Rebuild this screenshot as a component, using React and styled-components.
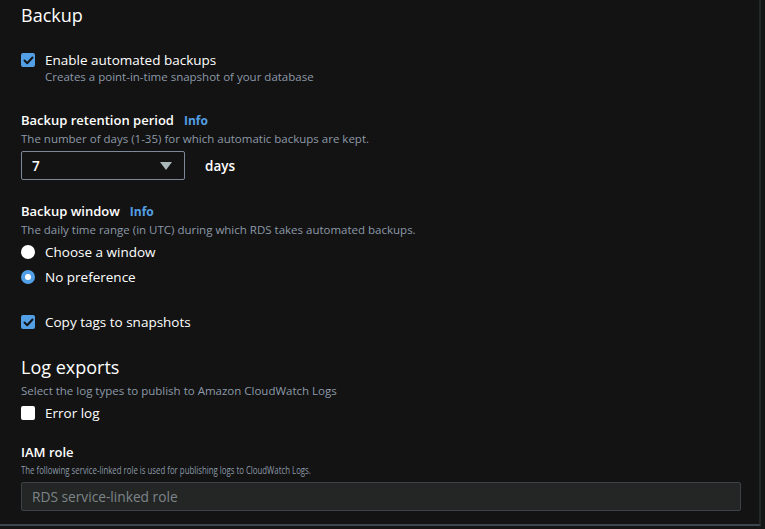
import styled, { createGlobalStyle } from 'styled-components'

const GlobalStyle = createGlobalStyle`
  html, body {
    margin: 0;
    padding: 0;
    background: #151515;
  }
  body {
    font-family: "Open Sans", "Noto Sans", sans-serif;
    color: #f2f3f3;
  }
`

const Page = styled.div`
  width: 761px;
  height: 526px;
  background: #131313;
  border-right: 2px solid #22272a;
  border-bottom: 2px solid #3d4650;
  box-sizing: border-box;
  padding: 3px 0 0 21px;
  overflow: hidden;
`

const Heading = styled.h2`
  margin: ${p => p.$top || 0}px 0 ${p => p.$bottom || 0}px;
  font-size: 18px;
  font-weight: 400;
  line-height: 24px;
  color: #ffffff;
`

const Section = styled.div`
  margin-top: ${p => p.$top || 0}px;
`

const LabelRow = styled.div`
  display: flex;
  align-items: baseline;
  gap: 10px;
  font-size: 13px;
  font-weight: 600;
  line-height: ${p => p.$lh || 19}px;
  color: #ffffff;
`

const Info = styled.a`
  color: #539fe5;
  font-size: 12px;
  font-weight: 700;
  text-decoration: none;
`

const Desc = styled.div`
  font-size: 11.5px;
  line-height: 17px;
  color: #8d99a8;
`

const OptionDesc = styled(Desc)`
  margin-top: -2px;
`

const Option = styled.label`
  display: flex;
  align-items: flex-start;
  gap: 10px;
  margin-top: ${p => p.$top || 0}px;
`

const Box = styled.span`
  width: 14px;
  height: 14px;
  margin-top: 3px;
  flex-shrink: 0;
  border-radius: 2px;
  background: ${p => (p.$checked ? '#539fe5' : '#ffffff')};
  display: flex;
  align-items: center;
  justify-content: center;
`

const Radio = styled.span`
  width: 14px;
  height: 14px;
  margin-top: 3px;
  flex-shrink: 0;
  border-radius: 50%;
  background: ${p => (p.$checked ? '#539fe5' : '#ffffff')};
  display: flex;
  align-items: center;
  justify-content: center;

  &::after {
    content: '';
    display: ${p => (p.$checked ? 'block' : 'none')};
    width: 6px;
    height: 6px;
    border-radius: 50%;
    background: #ffffff;
  }
`

const OptionText = styled.div`
  display: flex;
  flex-direction: column;
`

const OptionLabel = styled.span`
  font-size: 13.5px;
  line-height: 20px;
  font-weight: 500;
  color: #ffffff;
`

const SelectRow = styled.div`
  display: flex;
  align-items: center;
  gap: 20px;
  margin-top: 4px;
`

const Select = styled.div`
  width: 164px;
  height: 29px;
  box-sizing: border-box;
  border: 1px solid #7d8998;
  border-radius: 2px;
  display: flex;
  align-items: center;
  justify-content: space-between;
  padding: 0 12px 0 10px;
  font-size: 13.5px;
  font-weight: 600;
  color: #ffffff;
`

const Caret = styled.span`
  width: 0;
  height: 0;
  border-left: 6px solid transparent;
  border-right: 6px solid transparent;
  border-top: 8px solid #aab7b8;
`

const Unit = styled.span`
  font-size: 13.5px;
  font-weight: 600;
  color: #ffffff;
`

const Squeezed = styled.span`
  display: inline-block;
  white-space: nowrap;
  transform: scaleX(${p => p.$x || 0.68});
  transform-origin: left center;
`

const RoleInput = styled.div`
  width: 720px;
  height: 29px;
  box-sizing: border-box;
  margin-top: 4px;
  background: #242626;
  border: 1px solid #3c4246;
  border-radius: 2px;
  display: flex;
  align-items: center;
  padding-left: 10px;
  font-size: 14px;
  color: #7d8588;
`

const Check = () => (
  <svg width='11' height='9' viewBox='0 0 11 9'>
    <path d='M1.5 4.5 L4.2 7.2 L9.5 1.5' fill='none' stroke='#131313' strokeWidth='2' strokeLinecap='round' strokeLinejoin='round' />
  </svg>
)

export default function App () {
  return (
    <>
      <GlobalStyle />
      <Page>
        <Heading>Backup</Heading>

        <Option $top={23}>
          <Box $checked><Check /></Box>
          <OptionText>
            <OptionLabel>Enable automated backups</OptionLabel>
            <OptionDesc>Creates a point-in-time snapshot of your database</OptionDesc>
          </OptionText>
        </Option>

        <Section $top={26}>
          <LabelRow>Backup retention period <Info>Info</Info></LabelRow>
          <Desc>The number of days (1-35) for which automatic backups are kept.</Desc>
          <SelectRow>
            <Select>7<Caret /></Select>
            <Unit>days</Unit>
          </SelectRow>
        </Section>

        <Section $top={22}>
          <LabelRow>Backup window <Info>Info</Info></LabelRow>
          <Desc>The daily time range (in UTC) during which RDS takes automated backups.</Desc>
          <Option $top={4}>
            <Radio />
            <OptionLabel>Choose a window</OptionLabel>
          </Option>
          <Option $top={5}>
            <Radio $checked />
            <OptionLabel>No preference</OptionLabel>
          </Option>
        </Section>

        <Option $top={25}>
          <Box $checked><Check /></Box>
          <OptionLabel>Copy tags to snapshots</OptionLabel>
        </Option>

        <Heading $top={23} $bottom={3}>Log exports</Heading>
        <Desc>Select the log types to publish to Amazon CloudWatch Logs</Desc>
        <Option $top={4}>
          <Box />
          <OptionLabel>Error log</OptionLabel>
        </Option>

        <Section $top={21}>
          <LabelRow $lh={17}>IAM role</LabelRow>
          <Desc><Squeezed>The following service-linked role is used for publishing logs to CloudWatch Logs.</Squeezed></Desc>
          <RoleInput><Squeezed $x={0.98}>RDS service-linked role</Squeezed></RoleInput>
        </Section>
      </Page>
    </>
  )
}
